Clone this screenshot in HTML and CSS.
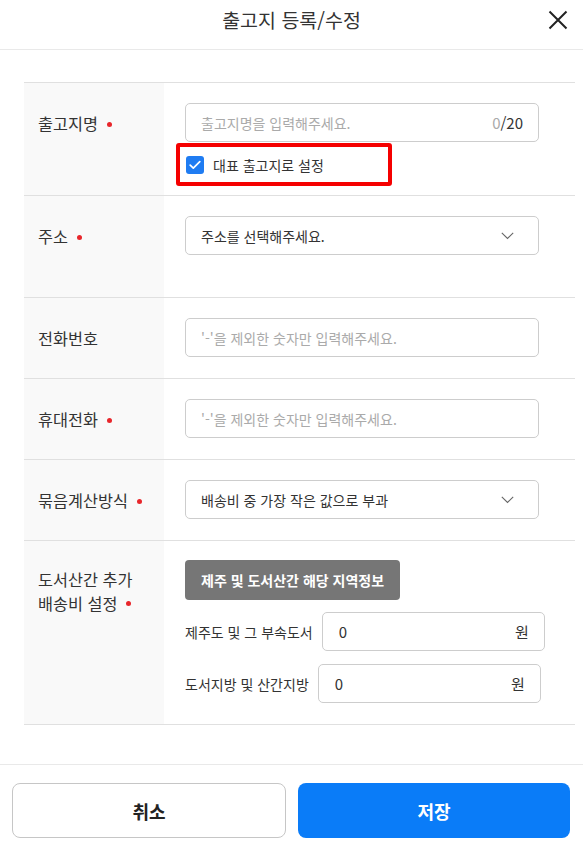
FILE: index.html
```html
<!DOCTYPE html>
<html lang="ko">
<head>
<meta charset="utf-8">
<title>출고지 등록/수정</title>
<link rel="stylesheet" href="styles.css">
</head>
<body>
<div class="modal">
  <header class="modal-header">
    <span class="spacer"></span>
    <h1 class="title">출고지 등록/수정</h1>
    <button class="close" aria-label="닫기">
      <svg width="20" height="20" viewBox="0 0 20 20"><path d="M1.5 1.5 L18.5 18.5 M18.5 1.5 L1.5 18.5" stroke="#222" stroke-width="2" fill="none"/></svg>
    </button>
  </header>

  <main class="modal-body">
    <div class="form-table">
      <div class="row">
        <div class="label-cell"><span class="label">출고지명</span><span class="req"></span></div>
        <div class="value-cell value-first">
          <div class="field">
            <span class="placeholder">출고지명을 입력해주세요.</span>
            <span class="counter"><span class="count-now">0</span>/20</span>
          </div>
          <label class="check-box">
            <span class="check"><svg width="12" height="10" viewBox="0 0 12 10"><path d="M1.2 5.2 L4.3 8.2 L10.8 1.6" stroke="#fff" stroke-width="1.7" fill="none" stroke-linecap="round" stroke-linejoin="round"/></svg></span>
            <span class="check-text">대표 출고지로 설정</span>
          </label>
        </div>
      </div>

      <div class="row">
        <div class="label-cell"><span class="label">주소</span><span class="req"></span></div>
        <div class="value-cell value-addr">
          <div class="field select">
            <span class="value">주소를 선택해주세요.</span>
            <svg class="chev" width="13" height="8" viewBox="0 0 13 8"><path d="M0.8 0.8 L6.5 6.5 L12.2 0.8" stroke="#666" stroke-width="1.1" fill="none"/></svg>
          </div>
        </div>
      </div>

      <div class="row">
        <div class="label-cell"><span class="label">전화번호</span></div>
        <div class="value-cell">
          <div class="field"><span class="placeholder">'-'을 제외한 숫자만 입력해주세요.</span></div>
        </div>
      </div>

      <div class="row">
        <div class="label-cell"><span class="label">휴대전화</span><span class="req"></span></div>
        <div class="value-cell">
          <div class="field"><span class="placeholder">'-'을 제외한 숫자만 입력해주세요.</span></div>
        </div>
      </div>

      <div class="row">
        <div class="label-cell"><span class="label">묶음계산방식</span><span class="req"></span></div>
        <div class="value-cell">
          <div class="field select">
            <span class="value">배송비 중 가장 작은 값으로 부과</span>
            <svg class="chev" width="13" height="8" viewBox="0 0 13 8"><path d="M0.8 0.8 L6.5 6.5 L12.2 0.8" stroke="#666" stroke-width="1.1" fill="none"/></svg>
          </div>
        </div>
      </div>

      <div class="row">
        <div class="label-cell label-cell-multi"><span class="label label-multi">도서산간 추가<br>배송비 설정<span class="req inline"></span></span></div>
        <div class="value-cell value-island">
          <button class="info-btn">제주 및 도서산간 해당 지역정보</button>
          <div class="fee-row first">
            <span class="fee-label">제주도 및 그 부속도서</span>
            <div class="fee-input"><span class="fee-value">0</span><span class="won">원</span></div>
          </div>
          <div class="fee-row">
            <span class="fee-label">도서지방 및 산간지방</span>
            <div class="fee-input"><span class="fee-value">0</span><span class="won">원</span></div>
          </div>
        </div>
      </div>
    </div>
  </main>

  <footer class="modal-footer">
    <button class="btn btn-cancel">취소</button>
    <button class="btn btn-save">저장</button>
  </footer>
</div>
</body>
</html>
```

FILE: styles.css
```css
* { box-sizing: border-box; }

html, body {
  margin: 0;
  padding: 0;
  background: #fff;
}

body {
  font-family: "Noto Sans CJK KR", "Noto Sans", sans-serif;
  color: #333;
  width: 583px;
  height: 852px;
  overflow: hidden;
}

.modal {
  display: flex;
  flex-direction: column;
  height: 852px;
}

.modal-header {
  height: 50px;
  border-bottom: 1px solid #e9e9e9;
  display: grid;
  grid-template-columns: 1fr auto 1fr;
  align-items: center;
}

.title {
  margin: 0;
  font-size: 19.5px;
  font-weight: 400;
  color: #333;
  line-height: 1;
  padding-bottom: 9px;
}

.close {
  justify-self: end;
  margin-right: 15px;
  margin-bottom: 9px;
  padding: 0;
  border: 0;
  background: none;
  width: 20px;
  height: 20px;
  display: flex;
}

.modal-body {
  flex: 1;
  padding: 32px 8px 0 24px;
}

.form-table {
  border-top: 1px solid #e0e0e0;
}

.row {
  display: flex;
  border-bottom: 1px solid #e0e0e0;
}

.label-cell {
  width: 140px;
  flex: none;
  background: #f9f9f9;
  padding: 30px 0 0 14px;
  display: flex;
  align-items: flex-start;
}

.label-cell-multi { padding-top: 27px; }

.label {
  font-size: 16.3px;
  line-height: 21px;
  color: #333;
}

.label-multi { line-height: 23.8px; }

.req {
  width: 5px;
  height: 5px;
  border-radius: 50%;
  background: #e8262b;
  margin: 9px 0 0 9px;
  flex: none;
}

.req.inline {
  display: inline-block;
  vertical-align: middle;
  margin: 0 0 3px 9px;
}

.value-cell {
  flex: 1;
  padding: 20px 36px 21px 21px;
}

.value-first { padding-bottom: 9px; }
.value-addr { padding-bottom: 42px; }
.value-island { padding: 19px 0 21px 21px; }

.field {
  height: 39px;
  border: 1px solid #cdcdcd;
  border-radius: 5px;
  padding: 0 15px;
  display: flex;
  align-items: center;
  justify-content: space-between;
  font-size: 14px;
}

.placeholder { color: #aaa; }
.value { color: #333; }

.counter { color: #333; font-size: 15px; }
.count-now { color: #aaa; }

.chev { margin-right: 9px; }

.check-box {
  margin: 1px 0 0 -9px;
  width: 216px;
  height: 43px;
  border: 4px solid #f50000;
  border-radius: 3px;
  display: flex;
  align-items: center;
  padding-left: 6px;
  gap: 9px;
}

.check {
  width: 18px;
  height: 18px;
  border-radius: 3px;
  background: #1f7cf2;
  display: flex;
  align-items: center;
  justify-content: center;
}

.check-text {
  font-size: 14px;
  color: #333;
}

.info-btn {
  height: 40px;
  padding: 0 16px;
  border: 0;
  border-radius: 4px;
  background: #767676;
  color: #fff;
  font-family: inherit;
  font-size: 14px;
  font-weight: 700;
}

.fee-row {
  display: flex;
  align-items: center;
  gap: 9px;
  margin-top: 13px;
}

.fee-row.first { margin-top: 12px; }

.fee-label {
  font-size: 14px;
  color: #333;
}

.fee-input {
  width: 223px;
  height: 39px;
  border: 1px solid #cdcdcd;
  border-radius: 5px;
  display: flex;
  align-items: center;
  justify-content: space-between;
  padding: 0 15px 0 16px;
  font-size: 15px;
  color: #333;
}

.modal-footer {
  border-top: 1px solid #e9e9e9;
  padding: 18px 13px 14px 12px;
  display: flex;
  gap: 12px;
}

.btn {
  flex: 1;
  height: 55px;
  border-radius: 8px;
  font-family: inherit;
  font-size: 18px;
  font-weight: 700;
}

.btn-cancel {
  background: #fff;
  border: 1px solid #c6c6c6;
  color: #222;
}

.btn-save {
  background: #0a7cf8;
  border: 0;
  color: #fff;
}
```
